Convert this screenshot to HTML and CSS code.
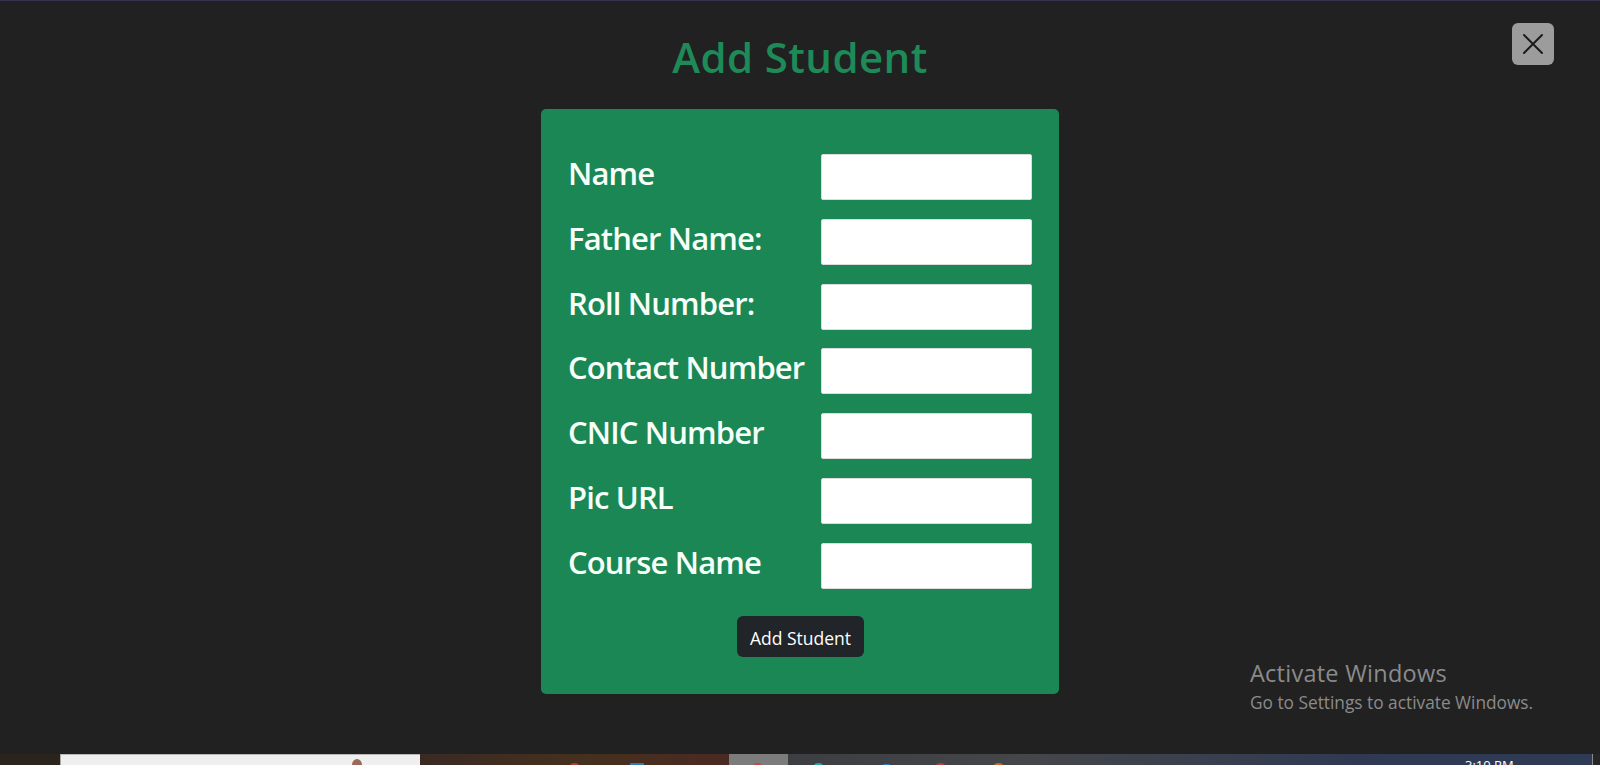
FILE: index.html
```html
<!DOCTYPE html>
<html lang="en">
<head>
<meta charset="utf-8">
<title>Add Student</title>
<link rel="stylesheet" href="styles.css">
</head>
<body>
<div class="page">
  <header class="top">
    <div class="spacer"></div>
    <h1 class="title">Add Student</h1>
    <button class="close" type="button" aria-label="Close">
      <svg width="22" height="22" viewBox="0 0 22 22"><path d="M2 2 L20 20 M20 2 L2 20" stroke="#1c1c1c" stroke-width="2" fill="none" stroke-linecap="round"/></svg>
    </button>
  </header>

  <main class="card">
    <form class="form">
      <div class="row"><label class="label">Name</label><input class="field" type="text"></div>
      <div class="row"><label class="label">Father Name:</label><input class="field" type="text"></div>
      <div class="row"><label class="label">Roll Number:</label><input class="field" type="text"></div>
      <div class="row"><label class="label">Contact Number</label><input class="field" type="text"></div>
      <div class="row"><label class="label">CNIC Number</label><input class="field" type="text"></div>
      <div class="row"><label class="label">Pic URL</label><input class="field" type="text"></div>
      <div class="row"><label class="label">Course Name</label><input class="field" type="text"></div>
      <div class="actions"><button class="submit" type="button">Add Student</button></div>
    </form>
  </main>

  <div class="watermark">
    <div class="wm-title">Activate Windows</div>
    <div class="wm-sub">Go to Settings to activate Windows.</div>
  </div>

  <footer class="taskbar">
    <div class="tb-a"></div>
    <div class="tb-b"><span class="face"></span></div>
    <div class="tb-c"><span class="dot red d1"></span><span class="dot blue d2"></span></div>
    <div class="tb-d"><span class="dot red d3"></span></div>
    <div class="tb-e">
      <span class="dot cyan d4"></span><span class="dot blue d5"></span><span class="dot red d6"></span><span class="dot orange d7"></span>
      <span class="clock">3:10 PM</span>
    </div>
    <div class="tb-f"></div>
  </footer>
</div>
</body>
</html>
```

FILE: styles.css
```css
* { box-sizing: border-box; }

html, body {
  margin: 0;
  padding: 0;
  background: #212121;
}

body {
  font-family: "Open Sans", "Noto Sans", sans-serif;
  color: #fff;
  overflow: hidden;
}

.page {
  position: relative;
  height: 765px;
  display: flex;
  flex-direction: column;
  border-top: 1px solid #3b3157;
}

.top {
  display: grid;
  grid-template-columns: 1fr auto 1fr;
  align-items: start;
  height: 108px;
}

.title {
  margin: 0;
  padding-top: 28px;
  font-size: 42px;
  font-weight: 600;
  line-height: 56px;
  letter-spacing: 0.4px;
  color: #1d8a58;
}

.close {
  justify-self: end;
  margin: 22px 46px 0 0;
  width: 42px;
  height: 42px;
  border: none;
  border-radius: 6px;
  background: #9c9c9c;
  display: flex;
  align-items: center;
  justify-content: center;
  padding: 0;
}

.card {
  width: 518px;
  margin: 0 auto;
  background: #1b8754;
  border-radius: 5px;
  padding: 45px 27px 37px 27px;
}

.form {
  display: flex;
  flex-direction: column;
  gap: 18.8px;
}

.row {
  display: grid;
  grid-template-columns: 253px 211px;
  height: 46px;
  align-items: start;
}

.label {
  font-size: 31px;
  font-weight: 600;
  line-height: 38px;
  letter-spacing: -0.85px;
  color: #f6fff9;
  white-space: nowrap;
}

.field {
  width: 211px;
  height: 46px;
  border: 1px solid #dcdcdc;
  border-radius: 2px;
  background: #fff;
  margin: 0;
}

.actions {
  display: flex;
  justify-content: center;
  margin-top: 8px;
  padding-left: 1px;
}

.submit {
  width: 127px;
  height: 41px;
  border: none;
  border-radius: 6px;
  background: #212529;
  color: #fff;
  font-family: "Open Sans", "Noto Sans", sans-serif;
  font-size: 17.5px;
  padding: 3px 0 0 0;
}

.watermark {
  position: absolute;
  left: 1250px;
  top: 657px;
  color: #8b8b8b;
}

.wm-title {
  font-size: 23.5px;
  line-height: 31px;
  letter-spacing: 0.25px;
}

.wm-sub {
  font-size: 17.3px;
  line-height: 28px;
}

.taskbar {
  margin-top: auto;
  height: 11px;
  display: flex;
  overflow: hidden;
}

.taskbar > div {
  position: relative;
  height: 100%;
}

.tb-a { width: 60px; background: #2a241c; }
.tb-b { width: 360px; background: #efefef; border-top: 1px solid #b8b8b8; border-left: 1px solid #aaa; }
.tb-c { width: 309px; background: linear-gradient(90deg, #3a2a22, #45301f 50%, #4a2a22); }
.tb-d { width: 59px; background: #7c7c7c; }
.tb-e { flex: 1; background: linear-gradient(90deg, #3d3e42 0%, #45464a 30%, #2f3a52 70%, #2e3b55 100%); }
.tb-f { width: 8px; background: #262626; border-left: 1px solid #8a8a8a; }

.face {
  position: absolute;
  left: 291px;
  top: 4px;
  width: 10px;
  height: 12px;
  border-radius: 50%;
  background: #9a6a58;
}

.dot {
  position: absolute;
  top: 9px;
  width: 9px;
  height: 6px;
  border-radius: 50% 50% 0 0;
  opacity: 0.85;
}
.red { background: #c9413c; }
.blue { background: #2a8ad0; border-radius: 1px; width: 14px; }
.cyan { background: #2bb3c4; }
.orange { background: #e0702a; }
.d1 { left: 150px; }
.d2 { left: 210px; }
.d3 { left: 24px; }
.d4 { left: 26px; }
.d5 { left: 95px; top: 10px; width: 7px; }
.d6 { left: 148px; }
.d7 { left: 206px; }

.clock {
  position: absolute;
  left: 677px;
  top: 3px;
  font-size: 13px;
  line-height: 16px;
  color: #fff;
  font-family: "Open Sans", sans-serif;
}
```
